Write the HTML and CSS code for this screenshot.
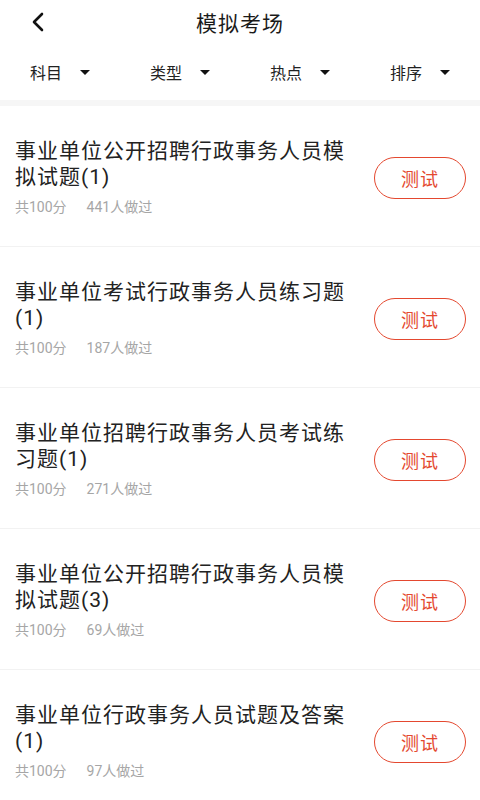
FILE: index.html
```html
<!DOCTYPE html>
<html>
<head>
  <meta charset="utf-8">
  <title>模拟考场</title>
  <link rel="stylesheet" href="styles.css">
</head>
<body>
  <div class="top-bar">
    <svg class="back" width="14" height="20" viewBox="0 0 14 20">
      <path d="M11 2 L3 10 L11 18" fill="none" stroke="#111" stroke-width="2.6" stroke-linecap="round" stroke-linejoin="round"/>
    </svg>
    <div class="page-title">模拟考场</div>
  </div>
  <div class="filters">
    <div class="filter"><span>科目</span><i class="caret"></i></div>
    <div class="filter"><span>类型</span><i class="caret"></i></div>
    <div class="filter"><span>热点</span><i class="caret"></i></div>
    <div class="filter"><span>排序</span><i class="caret"></i></div>
  </div>
  <div class="list">
    <div class="item">
      <div class="info">
        <div class="name">事业单位公开招聘行政事务人员模拟试题(1)</div>
        <div class="meta"><span>共100分</span><span>441人做过</span></div>
      </div>
      <button class="test-button">测试</button>
    </div>
    <div class="item">
      <div class="info">
        <div class="name">事业单位考试行政事务人员练习题(1)</div>
        <div class="meta"><span>共100分</span><span>187人做过</span></div>
      </div>
      <button class="test-button">测试</button>
    </div>
    <div class="item">
      <div class="info">
        <div class="name">事业单位招聘行政事务人员考试练习题(1)</div>
        <div class="meta"><span>共100分</span><span>271人做过</span></div>
      </div>
      <button class="test-button">测试</button>
    </div>
    <div class="item">
      <div class="info">
        <div class="name">事业单位公开招聘行政事务人员模拟试题(3)</div>
        <div class="meta"><span>共100分</span><span>69人做过</span></div>
      </div>
      <button class="test-button">测试</button>
    </div>
    <div class="item">
      <div class="info">
        <div class="name">事业单位行政事务人员试题及答案(1)</div>
        <div class="meta"><span>共100分</span><span>97人做过</span></div>
      </div>
      <button class="test-button">测试</button>
    </div>
  </div>
</body>
</html>
```
FILE: styles.css
```css
body {
  font-family: Roboto, "Noto Sans CJK SC", sans-serif;
  margin: 0;
  background-color: #ffffff;
  color: #222;
}
.top-bar {
  height: 44px;
  display: flex;
  align-items: center;
  justify-content: center;
  position: relative;
}
.back {
  position: absolute;
  left: 31px;
  top: 12px;
}
.page-title {
  font-size: 21px;
  letter-spacing: 1px;
  color: #1a1a1a;
}
.filters {
  display: grid;
  grid-template-columns: repeat(4, 1fr);
  height: 56px;
  align-items: center;
  border-bottom: 6px solid #f6f6f6;
}
.filter {
  display: flex;
  align-items: center;
  padding-left: 30px;
  font-size: 16px;
  color: #222;
}
.caret {
  width: 0;
  height: 0;
  margin-left: 18px;
  border-left: 5px solid transparent;
  border-right: 5px solid transparent;
  border-top: 5px solid #111;
}
.item {
  display: flex;
  align-items: center;
  padding: 32px 14px 29px 15px;
  border-bottom: 1px solid #f2f2f2;
}
.info {
  flex: 1;
  max-width: 340px;
}
.name {
  font-size: 21px;
  letter-spacing: 1px;
  line-height: 26px;
  color: #222;
}
.meta {
  margin-top: 7px;
  display: flex;
  gap: 20px;
  font-size: 14px;
  line-height: 20px;
  color: #a6a6a6;
}
.test-button {
  margin-left: auto;
  width: 92px;
  height: 42px;
  border: 1.5px solid #e4482f;
  border-radius: 21px;
  background-color: white;
  color: #e4482f;
  font-family: inherit;
  font-size: 18px;
  letter-spacing: 1px;
  cursor: pointer;
}
```
